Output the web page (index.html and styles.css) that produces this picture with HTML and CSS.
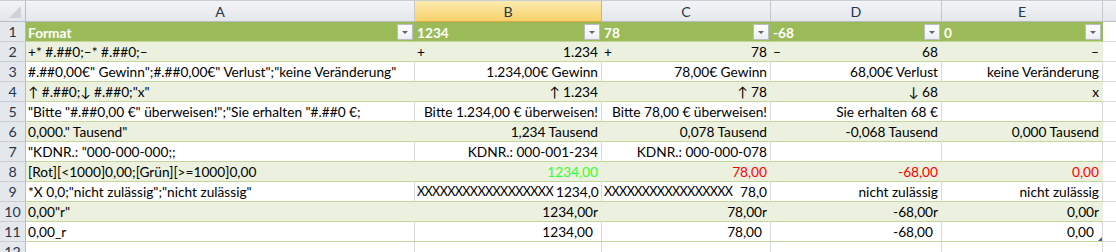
FILE: index.html
```html
<!DOCTYPE html>
<html lang="de">
<head>
<meta charset="utf-8">
<title>Zahlenformate</title>
<link rel="stylesheet" href="styles.css">
</head>
<body>
<div class="sheet">
  <div class="corner"><span class="tri"></span></div>
  <div class="ch">A</div>
  <div class="ch sel">B</div>
  <div class="ch">C</div>
  <div class="ch">D</div>
  <div class="ch">E</div>
  <div class="ch rest"></div>

  <div class="rh">1</div>
  <div class="c hd"><span>Format</span><span class="dd"></span></div>
  <div class="c hd"><span>1234</span><span class="dd"></span></div>
  <div class="c hd"><span>78</span><span class="dd"></span></div>
  <div class="c hd"><span>-68</span><span class="dd"></span></div>
  <div class="c hd"><span>0</span><span class="dd"></span></div>
  <div class="c out"></div>

  <div class="rh">2</div>
  <div class="c band">+* #.##0;–* #.##0;–</div>
  <div class="c band split"><span>+</span><span>1.234</span></div>
  <div class="c band split"><span>+</span><span>78</span></div>
  <div class="c band split"><span>–</span><span>68</span></div>
  <div class="c band r">–</div>
  <div class="c out"></div>

  <div class="rh">3</div>
  <div class="c">#.##0,00€" Gewinn";#.##0,00€" Verlust";"keine Veränderung"</div>
  <div class="c r">1.234,00€ Gewinn</div>
  <div class="c r">78,00€ Gewinn</div>
  <div class="c r">68,00€ Verlust</div>
  <div class="c r">keine Veränderung</div>
  <div class="c out"></div>

  <div class="rh">4</div>
  <div class="c band">↑ #.##0;↓ #.##0;"x"</div>
  <div class="c band r">↑ 1.234</div>
  <div class="c band r">↑ 78</div>
  <div class="c band r">↓ 68</div>
  <div class="c band r">x</div>
  <div class="c out"></div>

  <div class="rh">5</div>
  <div class="c">"Bitte "#.##0,00 €" überweisen!";"Sie erhalten "#.##0 €;</div>
  <div class="c r">Bitte 1.234,00 € überweisen!</div>
  <div class="c r">Bitte 78,00 € überweisen!</div>
  <div class="c r">Sie erhalten 68 €</div>
  <div class="c"></div>
  <div class="c out"></div>

  <div class="rh">6</div>
  <div class="c band">0,000." Tausend"</div>
  <div class="c band r">1,234 Tausend</div>
  <div class="c band r">0,078 Tausend</div>
  <div class="c band r">-0,068 Tausend</div>
  <div class="c band r">0,000 Tausend</div>
  <div class="c out"></div>

  <div class="rh">7</div>
  <div class="c">"KDNR.: "000-000-000;;</div>
  <div class="c r">KDNR.: 000-001-234</div>
  <div class="c r">KDNR.: 000-000-078</div>
  <div class="c"></div>
  <div class="c"></div>
  <div class="c out"></div>

  <div class="rh">8</div>
  <div class="c band">[Rot][&lt;1000]0,00;[Grün][&gt;=1000]0,00</div>
  <div class="c band r green">1234,00</div>
  <div class="c band r red">78,00</div>
  <div class="c band r red">-68,00</div>
  <div class="c band r red">0,00</div>
  <div class="c out"></div>

  <div class="rh">9</div>
  <div class="c">*X 0,0;"nicht zulässig";"nicht zulässig"</div>
  <div class="c split"><span class="xs">XXXXXXXXXXXXXXXXXX</span><span>1234,0</span></div>
  <div class="c split"><span class="xs">XXXXXXXXXXXXXXXXX</span><span>78,0</span></div>
  <div class="c r">nicht zulässig</div>
  <div class="c r">nicht zulässig</div>
  <div class="c out"></div>

  <div class="rh">10</div>
  <div class="c band">0,00"r"</div>
  <div class="c band r">1234,00r</div>
  <div class="c band r">78,00r</div>
  <div class="c band r">-68,00r</div>
  <div class="c band r">0,00r</div>
  <div class="c out"></div>

  <div class="rh">11</div>
  <div class="c">0,00_r</div>
  <div class="c r sp">1234,00</div>
  <div class="c r sp">78,00</div>
  <div class="c r sp">-68,00</div>
  <div class="c r sp last">0,00</div>
  <div class="c out"></div>

  <div class="rh">12</div>
  <div class="c plain"></div>
  <div class="c plain"></div>
  <div class="c plain"></div>
  <div class="c plain"></div>
  <div class="c plain"></div>
  <div class="c out"></div>
</div>
</body>
</html>
```

FILE: styles.css
```css
html, body {
  margin: 0;
  padding: 0;
  background: #ffffff;
  overflow: hidden;
}

.sheet {
  display: grid;
  grid-template-columns: 26px 389px 187px 169px 171px 161px 1fr;
  grid-template-rows: 22px repeat(12, 20px);
  width: 1116px;
  height: 252px;
  overflow: hidden;
  font-family: Lato, "Open Sans", sans-serif;
  font-size: 13.7px;
  color: #000;
}

.corner {
  position: relative;
  background: linear-gradient(#f2f3f5, #e3e6ea);
  border-right: 1px solid #b6bcc4;
  border-bottom: 1px solid #b6bcc4;
  border-top: 1px solid #c9ced5;
}
.tri {
  position: absolute;
  right: 4px;
  bottom: 3px;
  width: 0;
  height: 0;
  border-left: 12px solid transparent;
  border-bottom: 12px solid #ced2d8;
}

.ch {
  display: flex;
  align-items: center;
  justify-content: center;
  background: linear-gradient(#f3f4f6, #e4e7eb);
  border-right: 1px solid #c3c8cf;
  border-bottom: 1px solid #b6bcc4;
  border-top: 1px solid #c9ced5;
  color: #27374c;
  font-size: 14.2px;
  padding-top: 1px;
}
.ch.sel {
  background: linear-gradient(#fcebb0, #f8d16a);
  border-right-color: #e1b250;
  border-bottom-color: #dca646;
}
.ch.rest {
  border-right: none;
}

.rh {
  display: flex;
  align-items: flex-end;
  justify-content: center;
  background: #e4e7eb;
  border-right: 1px solid #b6bcc4;
  border-bottom: 1px solid #c9ced5;
  color: #27374c;
  font-size: 14.2px;
  line-height: 19px;
}

.c {
  display: flex;
  align-items: flex-end;
  padding: 0 3px 0 2px;
  white-space: nowrap;
  overflow: hidden;
  line-height: 19px;
  background: #ffffff;
  border-bottom: 1px solid #c4d79b;
  border-right: 1px solid #d9d9d9;
}
.c.band {
  background: #ebf1de;
  border-right-color: #ebf1de;
}
.c.hd {
  background: #9bbb59;
  border-right-color: #9bbb59;
  color: #ffffff;
  font-weight: bold;
  justify-content: space-between;
  align-items: center;
  padding-right: 1px;
}
.c.hd span:first-child {
  padding-top: 1px;
}
.dd {
  position: relative;
  width: 14px;
  height: 14px;
  background: linear-gradient(#ffffff, #eceef1);
  border: 1px solid #b9bec5;
}
.dd::after {
  content: "";
  position: absolute;
  left: 4px;
  top: 6px;
  border-left: 3px solid transparent;
  border-right: 3px solid transparent;
  border-top: 3px solid #5c6470;
}
.c.r {
  justify-content: flex-end;
}
.c.split {
  justify-content: space-between;
  gap: 3px;
}
.xs {
  flex: none;
  font-size: 12.6px;
  letter-spacing: -0.62px;
}
.c.sp {
  padding-right: 8px;
}
.c.last {
  position: relative;
}
.c.last::after {
  content: "";
  position: absolute;
  right: 0;
  bottom: 0;
  border-left: 4px solid transparent;
  border-bottom: 4px solid #3f5b9a;
}
.c.out {
  background: #ffffff;
  border-bottom: 1px solid #d9d9d9;
  border-right: none;
}
.c.plain {
  border-bottom: 1px solid #d9d9d9;
}
.green {
  color: #33ff33;
}
.red {
  color: #ff0000;
}
```
